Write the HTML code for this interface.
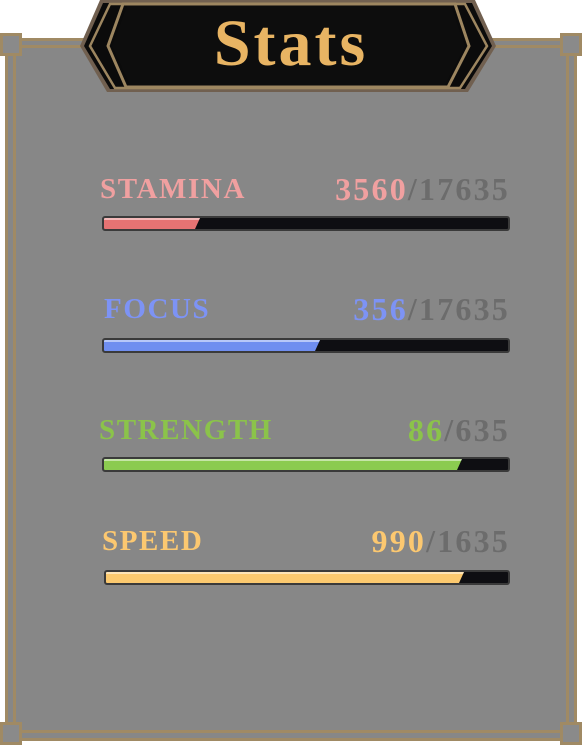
<!DOCTYPE html>
<html><head><meta charset="utf-8"><style>
*{margin:0;padding:0;box-sizing:border-box}
body{width:582px;height:745px;background:#fff;position:relative;overflow:hidden;font-family:"Liberation Serif",serif}
.a{position:absolute}
.sq{position:absolute;width:22px;height:23px;background:#8a8a8a;border:3px solid #a08a64}
.lab{position:absolute;font-size:29px;line-height:30px;font-weight:bold;letter-spacing:1.6px}
.val{position:absolute;right:72px;font-size:32px;line-height:30px;font-weight:bold;letter-spacing:2.2px}
.val span{color:#6c6c6c}
.bar{position:absolute;left:102px;width:408px;height:15px;background:#0e0e12;border:2px solid #3a3a3a;border-radius:3px;overflow:hidden}
.fill{position:absolute;left:0;top:0;bottom:0;clip-path:polygon(0 0,100% 0,calc(100% - 5px) 100%,0 100%);border-top:2px solid rgba(255,255,255,.5)}
</style></head><body>
<div class="a" style="left:5px;top:38px;width:572px;height:703px;background:#878787;border:3px solid #a08a64"></div>
<div class="a" style="left:13px;top:45px;width:556px;height:688px;border:3px solid #a08a64;border-bottom-width:3px"></div>
<div class="sq" style="left:0;top:33px"></div>
<div class="sq" style="right:0;top:33px"></div>
<div class="sq" style="left:0;top:722px"></div>
<div class="sq" style="right:0;top:722px"></div>
<svg class="a" style="left:0;top:0" width="582" height="100">
<polygon points="100,0 475,0 496,46 468,92 107,92 80,46" fill="#716050"/>
<polygon points="103,3 472,3 492,46 465,89 110,89 84,46" fill="#0b0b0b"/>
<polygon points="110,4 465,4 487,46 460,88 115,88 90,46" fill="none" stroke="#9d8660" stroke-width="2.5"/>
<polygon points="123,4 455,4 469,46 448,87 126,87 108,46" fill="none" stroke="#9d8660" stroke-width="3"/>
<polygon points="127,6 451,6 465,46 445,85 130,85 112,46" fill="#0d0d0d"/>
<text x="291" y="65" text-anchor="middle" font-family="Liberation Serif,serif" font-size="66" font-weight="bold" letter-spacing="3" fill="#e8b463">Stats</text>
</svg>

<div class="lab" style="left:100px;top:174px;color:#f0a0a0">STAMINA</div>
<div class="val" style="top:174px;color:#f0a0a0">3560<span>/17635</span></div>
<div class="bar" style="top:216px"><div class="fill" style="width:96px;background:#e57373"></div></div>

<div class="lab" style="left:104px;top:294px;color:#7d93f5">FOCUS</div>
<div class="val" style="top:294px;color:#7d93f5">356<span>/17635</span></div>
<div class="bar" style="top:338px"><div class="fill" style="width:216px;background:#6f8ef0"></div></div>

<div class="lab" style="left:99px;top:415px;color:#8bc34a">STRENGTH</div>
<div class="val" style="top:415px;color:#8bc34a">86<span>/635</span></div>
<div class="bar" style="top:457px"><div class="fill" style="width:358px;background:#8bcb50"></div></div>

<div class="lab" style="left:102px;top:526px;color:#fcc870">SPEED</div>
<div class="val" style="top:526px;color:#fcc870">990<span>/1635</span></div>
<div class="bar" style="top:570px;left:104px;width:406px"><div class="fill" style="width:358px;background:#fbc96f"></div></div>
</body></html>
